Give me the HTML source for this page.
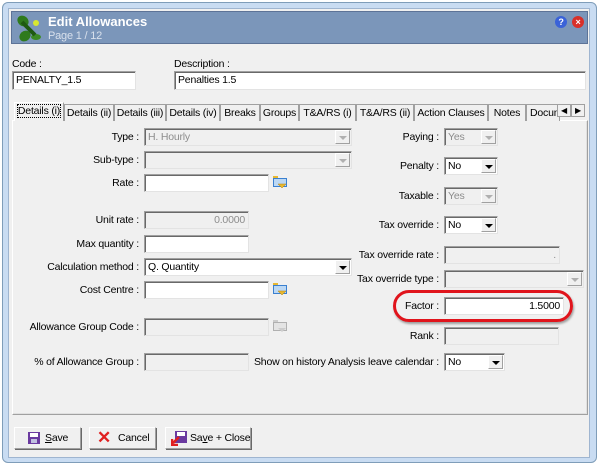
<!DOCTYPE html>
<html><head><meta charset="utf-8"><style>
*{box-sizing:border-box;margin:0;padding:0}
body{width:600px;height:465px;background:#fff;position:relative;overflow:hidden;font-family:"Liberation Sans",sans-serif;font-size:10.5px;letter-spacing:-0.2px;color:#000}
.a{position:absolute}
.frame{left:2px;top:2px;width:595px;height:461px;border:1px solid #7f9db9;border-radius:6px;background:#c9dcf2}
.win{left:8px;top:8px;width:582px;height:450px;background:#f0f0f0;border:1px solid #9fb5d0}
.hdr{left:11px;top:11px;width:577px;height:33px;background:#7b96ba;border:1px solid #5d7397}
.lbl{position:absolute;white-space:nowrap}
.r{text-align:right}
.in{position:absolute;height:18px;background:#fff;border:1px solid #a0a0a0;border-right-color:#e3e3e3;border-bottom-color:#e3e3e3;box-shadow:inset 1px 1px 0 #696969;padding:2px 3px;white-space:nowrap;overflow:hidden}
.dis{background:#f0f0f0;color:#8d8d8d}
.arr{position:absolute;right:1px;top:1px;width:15px;height:14px;background:#f0f0f0;border:1px solid #fff;border-right-color:#a0a0a0;border-bottom-color:#a0a0a0}
.arr:after{content:"";position:absolute;left:3px;top:5px;border-left:4px solid transparent;border-right:4px solid transparent;border-top:4px solid #000}
.dis .arr:after{border-top-color:#b0b0b0}
.tab{position:absolute;top:104px;height:17px;border:1px solid #a0a0a0;border-bottom:none;background:#f0f0f0;padding:2px 0 0;text-align:center;white-space:nowrap;overflow:hidden}
.btn{position:absolute;top:427px;height:22px;border:1px solid #a0a0a0;border-top-color:#fff;border-left-color:#fff;box-shadow:1px 1px 0 #696969;background:#f0f0f0;padding-top:4px;white-space:nowrap}
.ic{position:absolute;width:14px;height:13px}
</style></head><body>
<div class="a frame"></div>
<div class="a win"></div>
<div class="a hdr"></div>
<svg class="a" style="left:14px;top:13px" width="28" height="30" viewBox="0 0 28 30">
<ellipse cx="9" cy="8" rx="6" ry="5" fill="#2f7a1d" transform="rotate(40 9 8)"/>
<ellipse cx="11" cy="23" rx="6" ry="5" fill="#2f7a1d" transform="rotate(-40 11 23)"/>
<ellipse cx="22" cy="24" rx="5" ry="3" fill="#3b8a24"/>
<path d="M8 9 L21 22" stroke="#1f5a12" stroke-width="4"/>
<circle cx="22" cy="10" r="3" fill="#d8e830"/>
</svg>
<div class="lbl" style="left:48px;top:14px;color:#fff;font-weight:bold;font-size:13px;letter-spacing:0">Edit Allowances</div>
<div class="lbl" style="left:48px;top:30px;color:#d8e0ec;font-size:11px">Page 1 / 12</div>
<div class="a" style="left:555px;top:16px;width:12px;height:12px;border-radius:50%;background:#3a62d8;color:#fff;font-size:9px;font-weight:bold;text-align:center;line-height:12px">?</div>
<div class="a" style="left:572px;top:16px;width:12px;height:12px;border-radius:50%;background:#d8302a;color:#fff;font-size:9px;font-weight:bold;text-align:center;line-height:12px">×</div>

<div class="lbl" style="left:12px;top:58px">Code :</div>
<div class="in" style="left:12px;top:71px;width:124px;height:19px">PENALTY_1.5</div>
<div class="lbl" style="left:174px;top:58px">Description :</div>
<div class="in" style="left:174px;top:71px;width:412px;height:19px">Penalties 1.5</div>

<div class="a" style="left:12px;top:120px;width:576px;height:295px;border:1px solid #a0a0a0;border-top-color:#fff;border-left-color:#fff;box-shadow:inset -1px -1px 0 #e0e0e0"></div>
<div class="tab" style="left:14px;top:102px;height:19px;width:50px;border-color:#fff #a0a0a0 #f0f0f0 #fff;z-index:2"><span style="outline:1px dotted #000">Details (i)</span></div>
<div class="tab" style="left:64px;width:50px">Details (ii)</div>
<div class="tab" style="left:114px;width:52px">Details (iii)</div>
<div class="tab" style="left:166px;width:54px">Details (iv)</div>
<div class="tab" style="left:220px;width:40px">Breaks</div>
<div class="tab" style="left:260px;width:39px">Groups</div>
<div class="tab" style="left:299px;width:57px">T&amp;A/RS (i)</div>
<div class="tab" style="left:356px;width:58px">T&amp;A/RS (ii)</div>
<div class="tab" style="left:414px;width:74px">Action Clauses</div>
<div class="tab" style="left:488px;width:38px">Notes</div>
<div class="tab" style="left:526px;width:34px;text-align:left;padding-left:3px">Document</div>
<div class="a" style="left:557px;top:104px;width:14px;height:13px;border:1px solid #a0a0a0;background:#f0f0f0;font-size:8px;text-align:center;line-height:11px">◀</div>
<div class="a" style="left:571px;top:104px;width:14px;height:13px;border:1px solid #a0a0a0;background:#f0f0f0;font-size:8px;text-align:center;line-height:11px">▶</div>

<div class="lbl r" style="left:20px;width:119px;top:131px">Type :</div>
<div class="in dis" style="left:144px;top:128px;width:208px">H. Hourly<div class="arr"></div></div>
<div class="lbl r" style="left:20px;width:119px;top:154px">Sub-type :</div>
<div class="in dis" style="left:144px;top:151px;width:208px"><div class="arr"></div></div>
<div class="lbl r" style="left:20px;width:119px;top:177px">Rate :</div>
<div class="in" style="left:144px;top:174px;width:125px"></div>
<svg class="ic" style="left:273px;top:176px" viewBox="0 0 14 13"><rect x="0" y="0" width="5" height="3" fill="#e8b830"/><rect x="0.5" y="2.5" width="13" height="8" fill="#bcd8f4" stroke="#3a80d0"/><path d="M5 8h8l-4 4z" fill="#e8b830" stroke="#b08010" stroke-width=".5"/></svg>
<div class="lbl r" style="left:20px;width:119px;top:214px">Unit rate :</div>
<div class="in dis r" style="left:144px;top:211px;width:105px">0.0000</div>
<div class="lbl r" style="left:20px;width:119px;top:238px">Max quantity :</div>
<div class="in" style="left:144px;top:235px;width:105px"></div>
<div class="lbl r" style="left:20px;width:119px;top:261px">Calculation method :</div>
<div class="in" style="left:144px;top:258px;width:208px">Q. Quantity<div class="arr"></div></div>
<div class="lbl r" style="left:20px;width:119px;top:284px">Cost Centre :</div>
<div class="in" style="left:144px;top:281px;width:125px"></div>
<svg class="ic" style="left:273px;top:283px" viewBox="0 0 14 13"><rect x="0" y="0" width="5" height="3" fill="#e8b830"/><rect x="0.5" y="2.5" width="13" height="8" fill="#bcd8f4" stroke="#3a80d0"/><path d="M5 8h8l-4 4z" fill="#e8b830" stroke="#b08010" stroke-width=".5"/></svg>
<div class="lbl r" style="left:20px;width:119px;top:321px">Allowance Group Code :</div>
<div class="in dis" style="left:144px;top:318px;width:125px"></div>
<svg class="ic" style="left:273px;top:320px" viewBox="0 0 14 13"><rect x="0" y="0" width="5" height="3" fill="#ccc"/><rect x="0.5" y="2.5" width="13" height="8" fill="#e4e4e4" stroke="#b0b0b0"/><path d="M5 8h8l-4 4z" fill="#ccc"/></svg>
<div class="lbl r" style="left:20px;width:119px;top:356px">% of Allowance Group :</div>
<div class="in dis" style="left:144px;top:353px;width:105px"></div>

<div class="lbl r" style="left:250px;width:189px;top:131px">Paying :</div>
<div class="in dis" style="left:444px;top:128px;width:54px">Yes<div class="arr"></div></div>
<div class="lbl r" style="left:250px;width:189px;top:160px">Penalty :</div>
<div class="in" style="left:444px;top:157px;width:54px">No<div class="arr"></div></div>
<div class="lbl r" style="left:250px;width:189px;top:190px">Taxable :</div>
<div class="in dis" style="left:444px;top:187px;width:54px">Yes<div class="arr"></div></div>
<div class="lbl r" style="left:250px;width:189px;top:219px">Tax override :</div>
<div class="in" style="left:444px;top:216px;width:54px">No<div class="arr"></div></div>
<div class="lbl r" style="left:250px;width:189px;top:249px">Tax override rate :</div>
<div class="in dis r" style="left:444px;top:246px;width:116px">.</div>
<div class="lbl r" style="left:250px;width:189px;top:273px">Tax override type :</div>
<div class="in dis" style="left:444px;top:270px;width:140px"><div class="arr"></div></div>
<div class="lbl r" style="left:250px;width:189px;top:300px">Factor :</div>
<div class="in r" style="left:444px;top:297px;width:120px">1.5000</div>
<div class="a" style="left:393px;top:290px;width:180px;height:32px;border:3px solid #e0141c;border-radius:16px;box-shadow:1px 2px 2px rgba(0,0,0,.35)"></div>
<div class="lbl r" style="left:250px;width:189px;top:330px">Rank :</div>
<div class="in dis" style="left:444px;top:327px;width:115px"></div>
<div class="lbl r" style="left:200px;width:239px;top:356px">Show on history Analysis leave calendar :</div>
<div class="in" style="left:444px;top:353px;width:61px">No<div class="arr"></div></div>

<div class="btn" style="left:14px;width:67px"><svg class="a" style="left:13px;top:4px" width="12" height="12" viewBox="0 0 12 12"><rect width="12" height="12" fill="#6a3aa0"/><rect x="2" y="1" width="8" height="4" fill="#fff"/><rect x="3" y="7" width="6" height="4" fill="#c0c0e0"/></svg><span style="position:absolute;left:30px"><u>S</u>ave</span></div>
<div class="btn" style="left:89px;width:67px"><span style="position:absolute;left:7px;top:0px;color:#e02020;font-size:17px;font-weight:bold;line-height:20px">✕</span><span style="position:absolute;left:28px">Cancel</span></div>
<div class="btn" style="left:165px;width:86px"><svg class="a" style="left:5px;top:3px" width="16" height="15" viewBox="0 0 16 15"><rect x="4" y="0" width="12" height="12" fill="#6a3aa0"/><rect x="6" y="1" width="8" height="4" fill="#fff"/><path d="M8 6 L2 12 M1 8 L1 14 L7 14" stroke="#e02020" stroke-width="2.5" fill="none"/></svg><span style="position:absolute;left:24px">Sa<u>v</u>e + Close</span></div>
</body></html>
